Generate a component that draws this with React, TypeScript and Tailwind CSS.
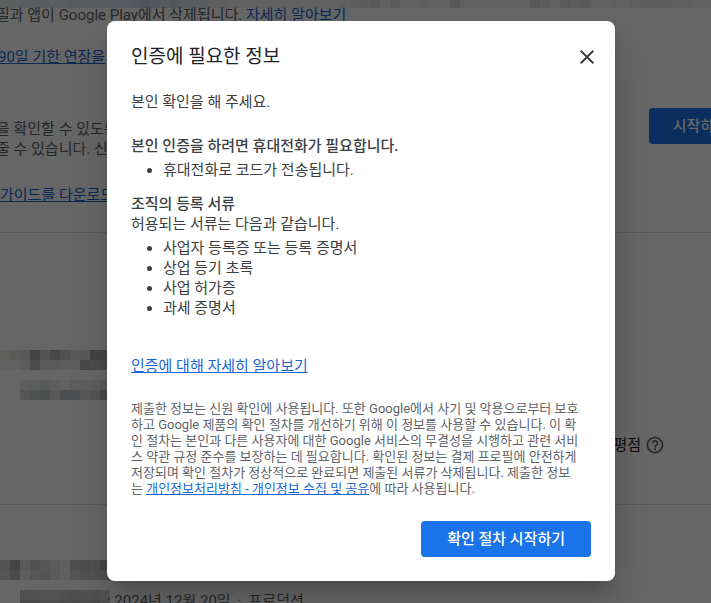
const LINK = "text-[#1967d2] underline";

// Colours of the redacted strips, one entry per 10px cell.
const TOP_STRIP = [
  "#e8ecf0", "#e6eaee", "#e2e6ee", "#e6e8ee", "#e2e8f0", "#e4e8f0", "#e0e6f0", "#dce2ee", "#e0e6f0",
  "#dce4f0", "#e0e6ee", "#dce4f0", "#dae2ee", "#d4dcea", "#cad2e2", "#d4dae6", "#d8dee8", "#d2d8e2",
  "#dce0e8", "#e2e4ea", "#e4e6ea", "#e8eaec", "#eaeaec", "#f0f0f0", "#f2f2f2", "#f0f0f0", "#f2f2f2",
  "#f2f2f2", "#f0f0f0", "#f2f2f2", "#f4f4f4", "#f2f2f2", "#f4f4f4", "#f2f2f2", "#f0f0f0", "#eaeaea",
  "#e6e6e6", "#dedede", "#f2f2f2", "#dedede", "#f0f0f0", "#f2f2f2", "#eeeeee", "#f2f2f2", "#f2f2f2",
  "#dcdcdc", "#f0f0f0", "#f2f2f2", "#f0f0f0", "#f2f2f2", "#f2f2f2", "#f0f0f0", "#f2f2f2", "#dadada",
  "#e8e8e8", "#f0f0f0", "#e2e2e2", "#e8e8e8", "#e2e2e2", "#f2f2f2", "#f4f4f4", "#f0f0f0", "#f2f2f2",
  "#eaeaea", "#e8e8e8", "#ececec", "#e8e8e8", "#eaeaea", "#eeeeee", "#f2f2f2", "#f4f4f4", "#f4f4f4",
] as const;
const NAME_ROWS = [
  ["#ebebe4", "#e2e2e2", "#dcdcda", "#aaaaaa", "#ccd2d2", "#b4b4ba", "#c6caca", "#dedede", "#dedede", "#a8a8a8", "#b0b0b0"],
  ["#f2f2f2", "#f2f2f2", "#e6e6e6", "#bebebe", "#e2e2e2", "#e2e2e2", "#e6e6e6", "#eaeeec", "#b6b6b6", "#bebebe", "#bcbcbc"],
] as const;
const PACKAGE_ROWS = [
  ["#ebebeb", "#e8e8e8", "#dce4e4", "#ececec", "#f5f5f5", "#ebebeb", "#ebebeb", "#ebebeb", "#e1e1e1"],
  ["#d4d8d8", "#c8cccc", "#bcc4c4", "#dcdcdc", "#bcc4c4", "#c4caca", "#dcdcdc", "#d4d8d8", "#bababa"],
] as const;
const RELEASE_ROWS = [
  ["#cccccc", "#aaaaaa", "#e1e1e1", "#c8c8c8", "#d6d6d6", "#e2e2e2", "#f0f0f0", "#c6c6c6", "#c4c4c4", "#c8c8c8", "#b2b2b2"],
  ["#d2d2d2", "#bcbcbc", "#ececec", "#d6d6d6", "#d2d2d2", "#e1e1e1", "#f0f0f0", "#d4d4d4", "#c8c8c8", "#cecece", "#c8c8c8"],
] as const;
const VERSION_ROWS = [
  ["#c8c8c8", "#cacaca", "#cecece", "#cccccc", "#c8c8c8", "#c2c2c2", "#cacaca", "#c8c8c8", "#d2d2d2"],
  ["#b8b4b4", "#bcb8b8", "#c4c4c4", "#c0c0c0", "#bcbcbc", "#b8b8b8", "#c0c0c0", "#bcbcbc", "#c8c8c8"],
] as const;

const DOCUMENTS = [
  "사업자 등록증 또는 등록 증명서",
  "상업 등기 초록",
  "사업 허가증",
  "과세 증명서",
] as const satisfies readonly string[];

type MosaicProps = {
  rows: readonly (readonly string[])[];
};
const Mosaic: React.FC<MosaicProps> = ({ rows }) => {
  return (
    <div aria-hidden>
      {rows.map((row, y) => (
        <div className="flex" key={y}>
          {row.map((color, x) => (
            <span
              key={x}
              className="h-2.5 w-2.5 shrink-0"
              style={{ backgroundColor: color }}
            />
          ))}
        </div>
      ))}
    </div>
  );
};

const HelpIcon: React.FC = () => {
  return (
    <svg viewBox="0 0 24 24" className="h-5 w-5" fill="currentColor" aria-hidden>
      <path d="M11 18h2v-2h-2v2zm1-16C6.48 2 2 6.48 2 12s4.48 10 10 10 10-4.48 10-10S17.52 2 12 2zm0 18c-4.41 0-8-3.59-8-8s3.59-8 8-8 8 3.59 8 8-3.59 8-8 8zm0-14c-2.21 0-4 1.79-4 4h2c0-1.1.9-2 2-2s2 .9 2 2c0 2-3 1.75-3 5h2c0-2.25 3-2.5 3-5 0-2.21-1.79-4-4-4z" />
    </svg>
  );
};

const CloseIcon: React.FC = () => {
  return (
    <svg viewBox="0 0 24 24" className="h-6 w-6" fill="currentColor" aria-hidden>
      <path d="M19 6.41 17.59 5 12 10.59 6.41 5 5 6.41 10.59 12 5 17.59 6.41 19 12 13.41 17.59 19 19 17.59 13.41 12z" />
    </svg>
  );
};

const ConsolePage: React.FC = () => {
  return (
    <main className="h-screen overflow-hidden bg-white whitespace-nowrap text-[#5f6368]">
      <div className="h-2 overflow-hidden">
        <Mosaic rows={[TOP_STRIP]} />
      </div>
      <p className="-mt-[3px] -ml-1">
        필과 앱이 Google Play에서 삭제됩니다.{" "}
        <a href="#more" className="text-[#1967d2]">
          자세히 알아보기
        </a>
      </p>
      <p className="mt-[22px] -ml-0.5">
        <a href="#extend" className={LINK}>
          90일 기한 연장을
        </a>
      </p>

      <section className="mt-[41px] flex items-start justify-between border-b border-[#dadce0] pb-[27px]">
        <div className="-ml-1 pt-[11px]">
          <p>
            을 확인할 수 있도록
            <br />줄 수 있습니다. 신
          </p>
          <p className="mt-[26px] ml-1">
            <a href="#guide" className={LINK}>
              가이드를 다운로드
            </a>
          </p>
        </div>
        <button
          type="button"
          className="-mr-[41px] h-9 rounded bg-[#1a73e8] px-6 font-medium text-white"
        >
          시작하기
        </button>
      </section>

      <section className="border-b border-[#dadce0] pt-[117px] pb-[49px]">
        <Mosaic rows={NAME_ROWS} />
        <div className="mt-2.5 pl-5">
          <Mosaic rows={PACKAGE_ROWS} />
        </div>
        <div className="mt-[35px] flex items-center justify-end gap-1 pr-[46px]">
          <span className="text-[#202124]">평점</span>
          <HelpIcon />
        </div>
      </section>

      <section className="pt-[55px]">
        <Mosaic rows={RELEASE_ROWS} />
        <div className="mt-2.5 flex items-start pl-5">
          <Mosaic rows={VERSION_ROWS} />
          <p className="-ml-[3px] flex gap-[7px] pt-px">
            <span>: 2024년 12월 20일</span>
            <span>·</span>
            <span>프로덕션</span>
          </p>
        </div>
      </section>
    </main>
  );
};

const VerifyDialog: React.FC = () => {
  return (
    <section
      role="dialog"
      aria-modal="true"
      aria-labelledby="dialog-title"
      className="w-full max-w-[508px] rounded-lg bg-white p-6 text-[#3c4043] shadow-[0_11px_15px_-7px_rgba(0,0,0,0.2),0_24px_38px_3px_rgba(0,0,0,0.14)]"
    >
      <header className="flex items-start justify-between">
        <h1 id="dialog-title" className="text-[19px] leading-6 text-[#202124]">
          인증에 필요한 정보
        </h1>
        <button type="button" aria-label="닫기" className="-mr-2">
          <CloseIcon />
        </button>
      </header>
      <p className="mt-[23px]">본인 확인을 해 주세요.</p>
      <h2 className="mt-6 font-medium">
        본인 인증을 하려면 휴대전화가 필요합니다.
      </h2>
      <ul className="mt-1 list-disc pl-8">
        <li>휴대전화로 코드가 전송됩니다.</li>
      </ul>
      <h2 className="mt-3.5 font-medium">조직의 등록 서류</h2>
      <p>허용되는 서류는 다음과 같습니다.</p>
      <ul className="mt-1 list-disc pl-8">
        {DOCUMENTS.map((name) => (
          <li key={name}>{name}</li>
        ))}
      </ul>
      <p className="mt-[38px]">
        <a href="#about" className={LINK}>
          인증에 대해 자세히 알아보기
        </a>
      </p>
      <p className="mt-[25px] text-[13px] leading-4 text-[#5f6368]">
        제출한 정보는 신원 확인에 사용됩니다. 또한 Google에서 사기 및 악용으로부터 보호
        <br />
        하고 Google 제품의 확인 절차를 개선하기 위해 이 정보를 사용할 수 있습니다. 이 확
        <br />
        인 절차는 본인과 다른 사용자에 대한 Google 서비스의 무결성을 시행하고 관련 서비
        <br />
        스 약관 규정 준수를 보장하는 데 필요합니다. 확인된 정보는 결제 프로필에 안전하게
        <br />
        저장되며 확인 절차가 정상적으로 완료되면 제출된 서류가 삭제됩니다. 제출한 정보
        <br />는{" "}
        <a href="#privacy" className={LINK}>
          개인정보처리방침 - 개인정보 수집 및 공유
        </a>
        에 따라 사용됩니다.
      </p>
      <footer className="mt-6 flex justify-end">
        <button
          type="button"
          className="h-9 rounded bg-[#1a73e8] px-[26px] font-medium text-white"
        >
          확인 절차 시작하기
        </button>
      </footer>
    </section>
  );
};

export default function App() {
  return (
    <div className="relative min-h-screen font-[Roboto,'Noto_Sans_CJK_KR',sans-serif] text-[15px] leading-5">
      <ConsolePage />
      <div className="absolute inset-0 flex items-center justify-center bg-black/60 pb-px pl-[11px]">
        <VerifyDialog />
      </div>
    </div>
  );
}
